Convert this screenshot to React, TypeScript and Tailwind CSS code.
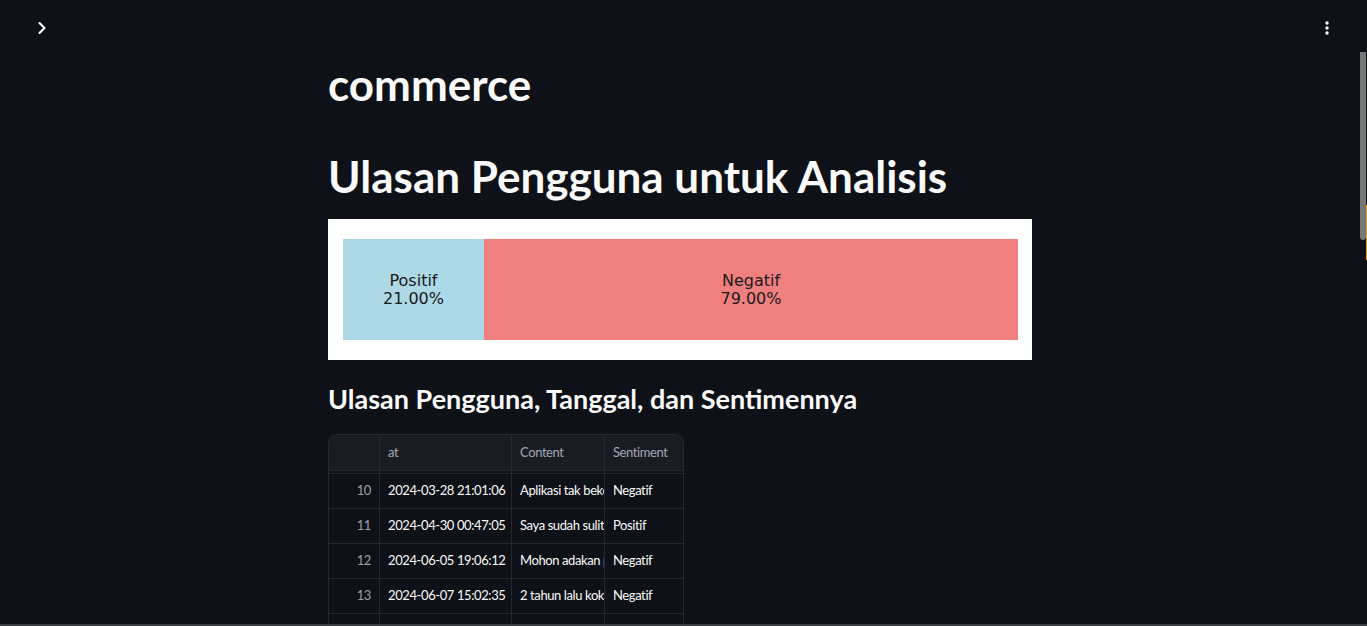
import { ChevronRight } from "lucide-react";

const rows = [
  { idx: 10, at: "2024-03-28 21:01:06", content: "Aplikasi tak bekerja dengan baik", sentiment: "Negatif" },
  { idx: 11, at: "2024-04-30 00:47:05", content: "Saya sudah sulit masuk akun", sentiment: "Positif" },
  { idx: 12, at: "2024-06-05 19:06:12", content: "Mohon adakan perbaikan", sentiment: "Negatif" },
  { idx: 13, at: "2024-06-07 15:02:35", content: "2 tahun lalu kok bisa", sentiment: "Negatif" },
  { idx: 14, at: "2024-06-10 08:14:51", content: "aneh sekali", sentiment: "Negatif" },
];

const cols = "grid grid-cols-[51px_132px_93px_78px]";
const line = "border-[#26282e]";

function SentimentBar() {
  return (
    <div className="bg-white w-[704px] h-[141px] pt-[20px] pl-[15px] pr-[14px]">
      <div className="flex h-[101px] text-[16px] leading-[18px] text-[#1a1a1a] font-['DejaVu_Sans',sans-serif]">
        <div className="w-[141px] bg-[#add8e6] flex flex-col items-center justify-center">
          <span>Positif</span>
          <span>21.00%</span>
        </div>
        <div className="flex-1 bg-[#f08080] flex flex-col items-center justify-center">
          <span>Negatif</span>
          <span>79.00%</span>
        </div>
      </div>
    </div>
  );
}

function ReviewTable() {
  return (
    <div className={`w-[356px] border ${line} rounded-t-lg overflow-hidden text-[13px] tracking-[-0.4px] font-['Lato',sans-serif]`}>
      <div className={`${cols} h-[36px] bg-[#1a1c24] border-b ${line} text-[#a3a8b4]`}>
        <div className={`border-r ${line}`} />
        <div className={`border-r ${line} px-2 flex items-center`}>at</div>
        <div className={`border-r ${line} px-2 flex items-center`}>Content</div>
        <div className="px-2 flex items-center">Sentiment</div>
      </div>
      <div className={`${cols} h-[3px] border-b ${line}`}>
        <div className={`border-r ${line}`} />
        <div className={`border-r ${line}`} />
        <div className={`border-r ${line}`} />
        <div />
      </div>
      {rows.map((r) => (
        <div key={r.idx} className={`${cols} h-[35px] border-b ${line} text-[#fafafa]`}>
          <div className={`border-r ${line} px-2 flex items-center justify-end text-[#9da0a8]`}>{r.idx}</div>
          <div className={`border-r ${line} px-2 flex items-center whitespace-nowrap overflow-hidden`}>{r.at}</div>
          <div className={`border-r ${line} px-2 flex items-center whitespace-nowrap overflow-hidden`}>{r.content}</div>
          <div className="px-2 flex items-center whitespace-nowrap overflow-hidden">{r.sentiment}</div>
        </div>
      ))}
    </div>
  );
}

export default function App() {
  return (
    <div className="relative flex h-[626px] w-full overflow-hidden bg-[#0e1117] text-[#fafafa] font-['Lato',sans-serif]">
      <div className="flex-1 flex flex-col">
        {/* top bar */}
        <div className="h-[56px] shrink-0 flex items-start justify-between pt-[18px] pl-[32px] pr-[30px]">
          <ChevronRight size={20} strokeWidth={2.5} className="text-white" />
          <svg width="6" height="16" viewBox="0 0 6 16" className="mt-[2px]">
            <circle cx="3" cy="3" r="1.7" fill="#fafafa" />
            <circle cx="3" cy="8" r="1.7" fill="#fafafa" />
            <circle cx="3" cy="13" r="1.7" fill="#fafafa" />
          </svg>
        </div>

        <div className="w-[704px] mx-auto shrink-0 flex flex-col">
          <h1 className="text-[44px] leading-[56px] font-bold">commerce</h1>
          <h1 className="mt-[40px] text-[44px] leading-[48px] font-bold">Ulasan Pengguna untuk Analisis</h1>
          <div className="mt-[19px]">
            <SentimentBar />
          </div>
          <h3 className="mt-[23px] text-[27px] leading-[32px] font-bold">Ulasan Pengguna, Tanggal, dan Sentimennya</h3>
          <div className="mt-[19px]">
            <ReviewTable />
          </div>
        </div>
      </div>

      {/* scrollbar */}
      <div className="w-[7px] flex">
        <div className="w-[6px] pt-[52px]">
          <div className="h-[188px] bg-[#777777] rounded-b-sm" />
        </div>
        <div className="w-[1px] pt-[205px]">
          <div className="h-[55px] bg-[#e89a1c]" />
        </div>
      </div>

      <div className="absolute left-0 right-0 bottom-0 h-[2px] bg-[#3a3c44]" />
    </div>
  );
}
